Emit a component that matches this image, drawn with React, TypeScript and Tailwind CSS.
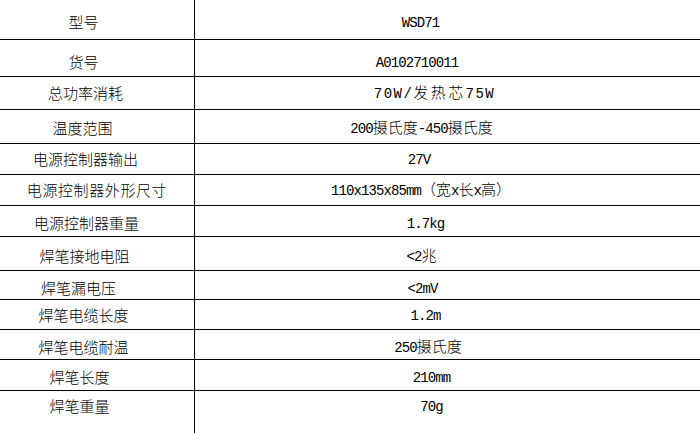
import React from "react";

type Row = {
  l: string;
  r: string;
  h: string;
  sh: string;
  lp: string;
  rp: string;
  wide?: boolean;
  last?: boolean;
};

const rows: Row[] = [
  { l: "型号", r: "WSD71", h: "h-[40px]", sh: "pt-[4px]", lp: "pr-[27px]", rp: "pr-[54px]" },
  { l: "货号", r: "A0102710011", h: "h-[37px]", sh: "pt-[7px]", lp: "pr-[27px]", rp: "pr-[61px]" },
  { l: "总功率消耗", r: "70W/发热芯75W", h: "h-[33px]", sh: "pt-[0px]", lp: "pr-[23px]", rp: "pr-[26px]", wide: true },
  { l: "温度范围", r: "200摄氏度-450摄氏度", h: "h-[34px]", sh: "pt-[2px]", lp: "pr-[29px]", rp: "pr-[52px]" },
  { l: "电源控制器输出", r: "27V", h: "h-[31px]", sh: "pt-[0px]", lp: "pr-[23px]", rp: "pr-[57px]" },
  { l: "电源控制器外形尺寸", r: "110x135x85mm（宽x长x高）", h: "h-[31px]", sh: "pt-[0px]", lp: "pr-[0px] tracking-[0.6px]", rp: "pr-[53px]" },
  { l: "电源控制器重量", r: "1.7kg", h: "h-[31px]", sh: "pt-[3px]", lp: "pr-[21px]", rp: "pr-[44px]" },
  { l: "焊笔接地电阻", r: "<2兆", h: "h-[34px]", sh: "pt-[4px]", lp: "pr-[25px]", rp: "pr-[52px]" },
  { l: "焊笔漏电压", r: "<2mV", h: "h-[29px]", sh: "pt-[5px]", lp: "pr-[37px]", rp: "pr-[50px]" },
  { l: "焊笔电缆长度", r: "1.2m", h: "h-[30px]", sh: "pt-[0px]", lp: "pr-[27px]", rp: "pr-[44px]" },
  { l: "焊笔电缆耐温", r: "250摄氏度", h: "h-[30px]", sh: "pt-[5px]", lp: "pr-[27px]", rp: "pr-[39px]" },
  { l: "焊笔长度", r: "210mm", h: "h-[31px]", sh: "pt-[4px]", lp: "pr-[35px]", rp: "pr-[32px]" },
  { l: "焊笔重量", r: "70g", h: "h-[42px]", sh: "pb-[13px]", lp: "pr-[35px]", rp: "pr-[32px]", last: true },
];

const CJK = /[\u3000-\u9fff\uff00-\uffef]+|[^\u3000-\u9fff\uff00-\uffef]+/g;
const isCjk = (s: string) => /[\u3000-\u9fff\uff00-\uffef]/.test(s);

function Mixed({ text, wide }: { text: string; wide?: boolean }) {
  const parts = text.match(CJK) || [];
  return (
    <span className="whitespace-nowrap leading-[20px]">
      {parts.map((p, i) =>
        isCjk(p) ? (
          <span
            key={i}
            className={`font-['Noto_Sans_CJK_SC',sans-serif] text-[15px] font-light ${wide ? "tracking-[2.4px]" : ""}`}
          >
            {p}
          </span>
        ) : (
          <span
            key={i}
            className={`font-['Liberation_Mono',monospace] text-[14px] ${wide ? "tracking-[1.5px]" : "tracking-[-0.9px]"}`}
          >
            {p}
          </span>
        )
      )}
    </span>
  );
}

export default function App() {
  return (
    <div className="w-[700px] h-[433px] bg-white text-black overflow-hidden">
      {rows.map((row, i) => (
        <div
          key={i}
          className={`grid grid-cols-[195px_1fr] ${row.h} ${row.last ? "" : "border-b border-black"}`}
        >
          <div
            className={`flex items-center justify-center border-r border-black font-['Noto_Sans_CJK_SC',sans-serif] text-[15px] font-light leading-[20px] whitespace-nowrap ${row.sh} ${row.lp}`}
          >
            {row.l}
          </div>
          <div className={`flex items-center justify-center ${row.sh} ${row.rp}`}>
            <Mixed text={row.r} wide={row.wide} />
          </div>
        </div>
      ))}
    </div>
  );
}
